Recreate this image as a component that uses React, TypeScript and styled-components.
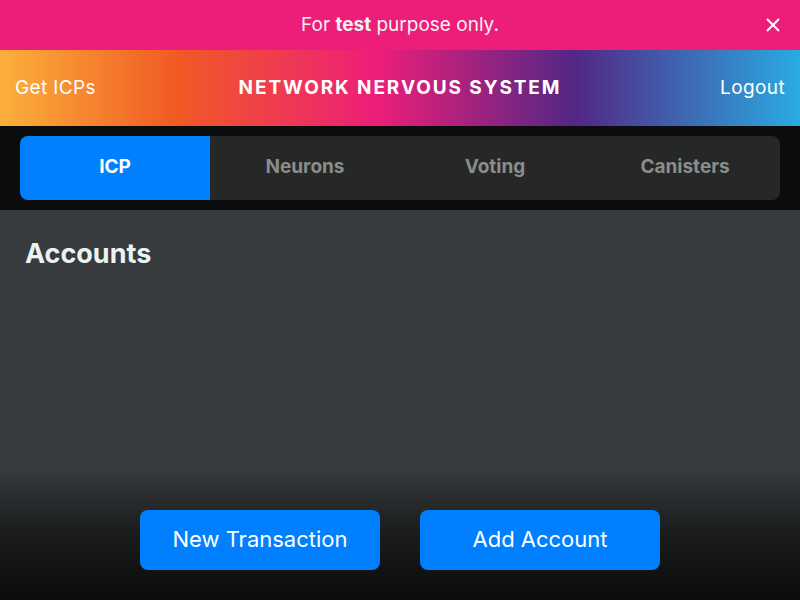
import React from 'react';
import styled, { createGlobalStyle } from 'styled-components';

const GlobalStyle = createGlobalStyle`
    html, body {
        margin: 0;
        padding: 0;
        height: 100%;
        background: #0b0d0d;
    }
    #root {
        height: 100%;
    }
    * {
        box-sizing: border-box;
    }
`;

const Page = styled.div`
    display: flex;
    flex-direction: column;
    height: 600px;
    font-family: "Inter", "Open Sans", sans-serif;
    color: #fff;
`;

const Banner = styled.div`
    height: 50px;
    flex: none;
    display: flex;
    align-items: center;
    justify-content: center;
    position: relative;
    padding-bottom: 2px;
    background-color: #ed1e79;
    font-size: 19px;
    color: #f4f0f2;

    b {
        font-weight: 700;
    }
`;

const CloseButton = styled.button`
    position: absolute;
    right: 16px;
    top: 50%;
    transform: translateY(-50%);
    width: 22px;
    height: 22px;
    padding: 0;
    border: none;
    background: none;
    display: flex;
    align-items: center;
    justify-content: center;
    cursor: pointer;
`;

const Header = styled.header`
    height: 76px;
    flex: none;
    display: grid;
    grid-template-columns: 1fr auto 1fr;
    align-items: center;
    padding: 0 15px 2px 15px;
    background: linear-gradient(
        90deg,
        #fbb03b 0%,
        #f15a24 22%,
        #ed1e79 47%,
        #522785 72%,
        #29abe2 100%
    );
`;

const HeaderLink = styled.a<{ right?: boolean }>`
    justify-self: ${props => props.right ? 'end' : 'start'};
    font-size: 19px;
    letter-spacing: 0.02em;
    color: #fff;
    text-decoration: none;
    cursor: pointer;
`;

const Title = styled.h1`
    margin: 0;
    font-size: 19px;
    font-weight: 700;
    letter-spacing: 0.1em;
`;

const NavBar = styled.div`
    flex: none;
    padding: 10px 20px;
    background-color: #0b0d0d;
`;

const Tabs = styled.nav`
    display: grid;
    grid-template-columns: repeat(4, 1fr);
    height: 64px;
    border-radius: 8px;
    overflow: hidden;
    background-color: #262827;
`;

const Tab = styled.button<{ active?: boolean }>`
    border: none;
    padding: 0 0 4px 0;
    font-family: inherit;
    font-size: 19px;
    font-weight: 700;
    cursor: pointer;
    color: ${props => props.active ? '#fff' : '#8a8d8c'};
    background-color: ${props => props.active ? '#0080ff' : 'transparent'};
`;

const Main = styled.main`
    flex: 1;
    display: flex;
    flex-direction: column;
    background-color: #383b3d;
`;

const Content = styled.section`
    flex: 1;
    padding: 27px 25px;
`;

const Heading = styled.h2`
    margin: 0;
    font-size: 27px;
    font-weight: 700;
    color: #eaf3f2;
`;

const Footer = styled.footer`
    flex: none;
    height: 130px;
    display: flex;
    justify-content: center;
    align-items: flex-start;
    gap: 40px;
    padding-top: 40px;
    background: linear-gradient(180deg, #383b3d 0%, #1b1d1e 45%, #0a0b0b 100%);
`;

const ActionButton = styled.button`
    width: 240px;
    height: 60px;
    border: none;
    border-radius: 8px;
    padding: 0 0 2px 0;
    background-color: #0080ff;
    color: #fff;
    font-family: inherit;
    font-size: 22px;
    cursor: pointer;
`;

const TABS = ['ICP', 'Neurons', 'Voting', 'Canisters'];

const App = () => {
    return (
        <>
            <GlobalStyle />
            <Page>
                <Banner>
                    <span>For <b>test</b> purpose only.</span>
                    <CloseButton aria-label="close">
                        <svg width="16" height="16" viewBox="0 0 16 16">
                            <path d="M2 2 L14 14 M14 2 L2 14" stroke="#fff" strokeWidth="2" />
                        </svg>
                    </CloseButton>
                </Banner>
                <Header>
                    <HeaderLink>Get ICPs</HeaderLink>
                    <Title>NETWORK NERVOUS SYSTEM</Title>
                    <HeaderLink right>Logout</HeaderLink>
                </Header>
                <NavBar>
                    <Tabs>
                        {TABS.map((tab, index) => (
                            <Tab key={tab} active={index === 0}>{tab}</Tab>
                        ))}
                    </Tabs>
                </NavBar>
                <Main>
                    <Content>
                        <Heading>Accounts</Heading>
                    </Content>
                    <Footer>
                        <ActionButton>New Transaction</ActionButton>
                        <ActionButton>Add Account</ActionButton>
                    </Footer>
                </Main>
            </Page>
        </>
    );
};

export default App;
